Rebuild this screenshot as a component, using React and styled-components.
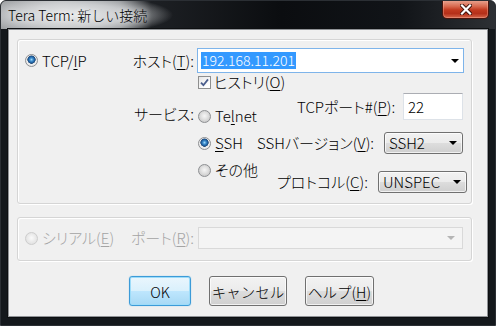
import React from "react";
import styled, { createGlobalStyle } from "styled-components";

const FONT = `"Noto Sans CJK JP", "Noto Sans", sans-serif`;

const GlobalStyle = createGlobalStyle`
  html, body {
    margin: 0;
    padding: 0;
    background: #ffffff;
  }
  body {
    font-family: ${FONT};
  }
`;

const Window = styled.div`
  width: 496px;
  height: 326px;
  box-sizing: border-box;
  display: flex;
  flex-direction: column;
  background: #14181c;
  border: 1px solid #2b2f34;
  border-radius: 6px 6px 0 0;
  overflow: hidden;
  font-family: ${FONT};
  font-weight: 300;
  font-feature-settings: "palt";
`;

const TitleBar = styled.div`
  height: 28px;
  flex: none;
  display: flex;
  align-items: flex-start;
  background:
    radial-gradient(ellipse 100px 20px at 72px 14px, rgba(236, 237, 238, 0.95) 0%, rgba(214, 216, 218, 0.8) 55%, rgba(190, 192, 195, 0) 100%),
    linear-gradient(90deg, #9a9da0 0px, #b4b6b8 60px, #8a8d90 118px, #1d2024 150px, #0b0d10 280px, #111418 400px, #2d3034 100%);
`;

const Title = styled.div`
  padding: 4px 0 0 7px;
  font-size: 14px;
  line-height: 20px;
  color: #000;
  text-shadow: 0 0 6px rgba(255, 255, 255, 0.9);
  font-feature-settings: normal;
`;

const CloseButton = styled.div`
  margin: -1px 6px 0 auto;
  width: 47px;
  height: 19px;
  box-sizing: border-box;
  border: 1px solid #4a140c;
  border-top: none;
  border-radius: 0 0 5px 5px;
  background: linear-gradient(180deg, #eaa996 0%, #d86a50 35%, #c23a20 55%, #b5301a 75%, #d5654a 100%);
  display: flex;
  align-items: center;
  justify-content: center;
  box-shadow: inset 0 0 0 1px rgba(255, 200, 180, 0.35);
`;

const Client = styled.div`
  flex: 1;
  margin: 0 7px 8px 7px;
  background: #f0f0f0;
  border: 1px solid #8f9296;
  box-shadow: 0 0 0 1px #0d0f11;
  display: flex;
  flex-direction: column;
  padding: 9px 0 0 8px;
`;

const Group = styled.div`
  width: 455px;
  height: ${(p) => p.$height}px;
  margin-top: ${(p) => p.$mt || 0}px;
  box-sizing: border-box;
  border: 1px solid #d5d5d5;
  border-radius: 3px;
  box-shadow: inset 1px 1px 0 #ffffff, 1px 1px 0 #ffffff;
`;

const FormGrid = styled.div`
  display: grid;
  grid-template-columns: 100px 72px 1fr;
  grid-auto-rows: auto;
  padding: ${(p) => p.$pt}px 0 0 7px;
  align-items: center;
`;

const Cell = styled.div`
  grid-column: ${(p) => p.$col};
  display: flex;
  align-self: ${(p) => p.$align || "center"};
  justify-content: ${(p) => (p.$right ? "flex-end" : "flex-start")};
  padding-right: ${(p) => (p.$right ? 3 : 0)}px;
  padding-top: ${(p) => p.$pt || 0}px;
  height: ${(p) => (p.$h ? `${p.$h}px` : "auto")};
  align-items: ${(p) => (p.$itemsEnd ? "flex-end" : "center")};
`;

const Label = styled.span`
  font-size: 15px;
  line-height: 20px;
  white-space: nowrap;
  color: ${(p) => (p.$disabled ? "#a4a4a4" : "#000")};
`;

const Key = styled.span`
  text-decoration: underline;
  text-underline-offset: 2px;
  text-decoration-thickness: 1px;
`;

const OptionRow = styled.label`
  display: flex;
  align-items: center;
  gap: ${(p) => p.$gap || 4}px;
  margin-left: ${(p) => p.$ml || 0}px;
  height: ${(p) => p.$h || 20}px;
  white-space: nowrap;
`;

const RadioDot = styled.span`
  flex: none;
  width: 13px;
  height: 13px;
  box-sizing: border-box;
  border-radius: 50%;
  border: 1px solid ${(p) => (p.$disabled ? "#cdcdcd" : "#8d8f92")};
  background: ${(p) =>
    p.$checked
      ? "radial-gradient(circle at 50% 42%, #a6dcfa 0, #3f8fcf 1.6px, #1d5a99 3.2px, #2b4f78 3.9px, #f1f1f1 4.4px, #d9d9d9 100%)"
      : p.$disabled
      ? "radial-gradient(circle at 50% 45%, #fafafa 0, #eeeeee 3px, #e2e2e2 6px)"
      : "radial-gradient(circle at 50% 45%, #f6f6f6 0, #e3e3e3 3px, #cdcdcd 6px)"};
`;

const CheckBox = styled.span`
  flex: none;
  width: 13px;
  height: 13px;
  box-sizing: border-box;
  border: 1px solid #8e8f8f;
  background: linear-gradient(135deg, #e6e6e6 0%, #ffffff 80%);
  display: flex;
  align-items: center;
  justify-content: center;
`;

const ComboBox = styled.div`
  width: ${(p) => p.$w}px;
  height: ${(p) => p.$h}px;
  margin-left: ${(p) => p.$ml || 0}px;
  box-sizing: border-box;
  display: flex;
  align-items: center;
  padding: 0 3px 0 3px;
  background: ${(p) => (p.$disabled ? "#f4f4f4" : "#ffffff")};
  border: 1px solid ${(p) => (p.$disabled ? "#d9d9d9" : "#7eb4ea")};
  font-size: 14px;
`;

const Selected = styled.span`
  background: #3399ff;
  color: #ffffff;
  line-height: 17px;
  padding: 0 1px;
  font-feature-settings: normal;
`;

const Arrow = styled.span`
  margin-left: auto;
  margin-right: ${(p) => (p.$mr === undefined ? 2 : p.$mr)}px;
  width: 0;
  height: 0;
  border-left: 4px solid transparent;
  border-right: 4px solid transparent;
  border-top: 4px solid ${(p) => (p.$disabled ? "#b5b5b5" : "#000")};
`;

const TextInput = styled.div`
  width: ${(p) => p.$w}px;
  height: 100%;
  box-sizing: border-box;
  background: #ffffff;
  border: 1px solid #dde2e8;
  border-top-color: #abadb3;
  padding: 3px 0 0 4px;
  font-size: 15px;
  line-height: 20px;
`;

const Select = styled.div`
  width: ${(p) => p.$w}px;
  height: 22px;
  box-sizing: border-box;
  border: 1px solid #707070;
  border-radius: 3px;
  background: linear-gradient(180deg, #f2f2f2 0%, #ebebeb 50%, #dddddd 51%, #cfcfcf 100%);
  box-shadow: inset 0 0 0 1px rgba(255, 255, 255, 0.7);
  display: flex;
  align-items: center;
  padding: 0 3px 0 4px;
  font-size: 15px;
  line-height: 20px;
  font-feature-settings: normal;
`;

const ServiceBlock = styled.div`
  grid-column: 3;
  display: flex;
  margin-top: 3px;
`;

const OptionsCol = styled.div`
  width: 59px;
  flex: none;
  display: flex;
  flex-direction: column;
  gap: 7px;
  padding-top: 13px;
`;

const FieldsCol = styled.div`
  display: flex;
  flex-direction: column;
`;

const FieldRow = styled.div`
  display: flex;
  align-items: center;
  height: ${(p) => p.$h}px;
  margin-top: ${(p) => p.$mt}px;
  padding-left: ${(p) => p.$indent}px;
`;

const FieldLabel = styled(Label)`
  width: ${(p) => p.$w}px;
  flex: none;
`;

const ButtonRow = styled.div`
  display: flex;
  gap: 18px;
  margin-top: 15px;
  padding-left: 112px;
`;

const Button = styled.button`
  width: ${(p) => p.$w}px;
  height: 30px;
  box-sizing: border-box;
  padding: 0;
  border-radius: 3px;
  font-family: ${FONT};
  font-weight: 300;
  font-size: 14.5px;
  font-feature-settings: normal;
  color: #000;
  border: 1px solid ${(p) => (p.$default ? "#3c9bd8" : "#707070")};
  background: ${(p) =>
    p.$default
      ? "linear-gradient(180deg, #eaf6fd 0%, #d9f0fc 50%, #bee6fd 51%, #a7d9f5 100%)"
      : "linear-gradient(180deg, #f2f2f2 0%, #ebebeb 50%, #dddddd 51%, #cfcfcf 100%)"};
  box-shadow: ${(p) =>
    p.$default ? "inset 0 0 0 1px #9ddcf9, 0 0 1px #5fb6e8" : "inset 0 0 0 1px rgba(255,255,255,0.7)"};
`;

const Radio = ({ checked, disabled, ml, gap, children }) => (
  <OptionRow $ml={ml} $gap={gap}>
    <RadioDot $checked={checked} $disabled={disabled} />
    <Label $disabled={disabled}>{children}</Label>
  </OptionRow>
);

const CloseGlyph = () => (
  <svg width="12" height="11" viewBox="0 0 12 11">
    <path d="M2 1.5 L10 9.5 M10 1.5 L2 9.5" stroke="#3a0f08" strokeWidth="4" strokeLinecap="square" />
    <path d="M2 1.5 L10 9.5 M10 1.5 L2 9.5" stroke="#ffffff" strokeWidth="2.2" strokeLinecap="square" />
  </svg>
);

const CheckGlyph = () => (
  <svg width="9" height="9" viewBox="0 0 9 9">
    <path d="M1 4.6 L3.4 7.2 L8 1.4" fill="none" stroke="#4a5d8c" strokeWidth="1.8" />
  </svg>
);

export default function App() {
  return (
    <>
      <GlobalStyle />
      <Window>
        <TitleBar>
          <Title>Tera Term: 新しい接続</Title>
          <CloseButton>
            <CloseGlyph />
          </CloseButton>
        </TitleBar>
        <Client>
          <Group $height={165}>
            <FormGrid $pt={8}>
              <Cell $col={1}>
                <Radio checked>
                  TCP/<Key>I</Key>P
                </Radio>
              </Cell>
              <Cell $col={2} $right>
                <Label>
                  ホスト(<Key>T</Key>):
                </Label>
              </Cell>
              <Cell $col={3}>
                <ComboBox $w={267} $h={25}>
                  <Selected>192.168.11.201</Selected>
                  <Arrow $mr={1} />
                </ComboBox>
              </Cell>

              <Cell $col={3} $h={17} $itemsEnd>
                <OptionRow $ml={1} $gap={3} $h={16}>
                  <CheckBox>
                    <CheckGlyph />
                  </CheckBox>
                  <Label>
                    ヒストリ(<Key>O</Key>)
                  </Label>
                </OptionRow>
              </Cell>

              <Cell $col={2} $right $align="start" $pt={14}>
                <Label>サービス:</Label>
              </Cell>
              <ServiceBlock>
                <OptionsCol>
                  <Radio ml={1}>
                    Te<Key>l</Key>net
                  </Radio>
                  <Radio ml={1} checked>
                    <Key>S</Key>SH
                  </Radio>
                  <Radio ml={1}>その他</Radio>
                </OptionsCol>
                <FieldsCol>
                  <FieldRow $h={27} $mt={0} $indent={41}>
                    <FieldLabel $w={106}>
                      TCPポート#(<Key>P</Key>):
                    </FieldLabel>
                    <TextInput $w={60}>22</TextInput>
                  </FieldRow>
                  <FieldRow $h={22} $mt={12} $indent={1}>
                    <FieldLabel $w={127}>
                      SSHバージョン(<Key>V</Key>):
                    </FieldLabel>
                    <Select $w={79}>
                      SSH2
                      <Arrow />
                    </Select>
                  </FieldRow>
                  <FieldRow $h={22} $mt={17} $indent={21}>
                    <FieldLabel $w={101}>
                      プロトコル(<Key>C</Key>):
                    </FieldLabel>
                    <Select $w={89}>
                      UNSPEC
                      <Arrow />
                    </Select>
                  </FieldRow>
                </FieldsCol>
              </ServiceBlock>
            </FormGrid>
          </Group>

          <Group $height={44} $mt={13}>
            <FormGrid $pt={9}>
              <Cell $col={1} $h={22}>
                <Radio disabled>
                  シリアル(<Key>E</Key>)
                </Radio>
              </Cell>
              <Cell $col={2} $right $h={22}>
                <Label $disabled>
                  ポート(<Key>R</Key>):
                </Label>
              </Cell>
              <Cell $col={3} $h={22}>
                <ComboBox $w={265} $h={22} $ml={1} $disabled>
                  <Arrow $disabled $mr={4} />
                </ComboBox>
              </Cell>
            </FormGrid>
          </Group>

          <ButtonRow>
            <Button $w={62} $default>
              OK
            </Button>
            <Button $w={78}>キャンセル</Button>
            <Button $w={69}>
              ヘルプ(<Key>H</Key>)
            </Button>
          </ButtonRow>
        </Client>
      </Window>
    </>
  );
}
